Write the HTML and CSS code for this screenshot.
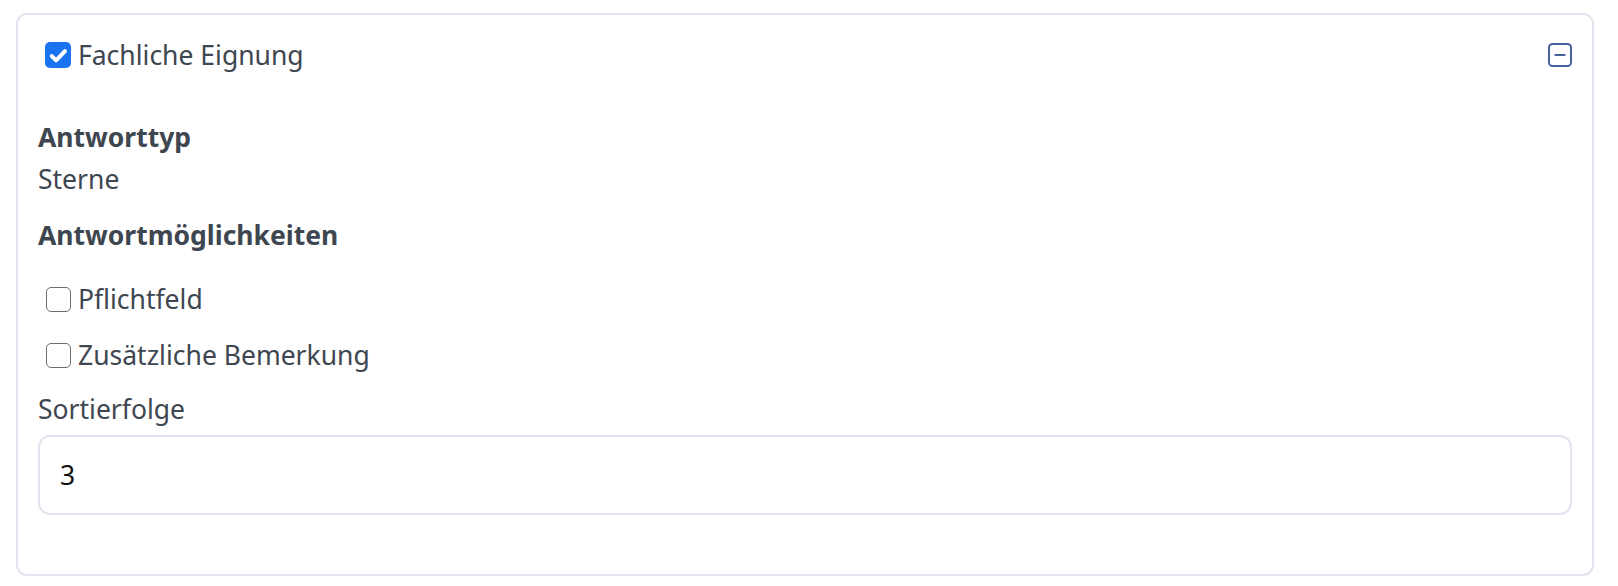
FILE: index.html
```html
<!DOCTYPE html>
<html lang="de">
<head>
    <meta charset="UTF-8">
    <meta name="viewport" content="width=device-width, initial-scale=1.0">
    <title>Fachliche Eignung</title>
    <link rel="stylesheet" href="styles.css">
</head>
<body>
    <div class="card">
        <div class="card-header">
            <label class="check">
                <input type="checkbox" class="box checked" checked>
                <span>Fachliche Eignung</span>
            </label>
            <button class="toggle" aria-label="Einklappen">
                <svg width="24" height="24" viewBox="0 0 24 24">
                    <rect x="1" y="1" width="22" height="22" rx="3.5" fill="none" stroke="#46639e" stroke-width="2"/>
                    <line x1="6.5" y1="12" x2="17.5" y2="12" stroke="#46639e" stroke-width="2"/>
                </svg>
            </button>
        </div>
        <div class="card-body">
            <div class="label-bold">Antworttyp</div>
            <div class="value">Sterne</div>
            <div class="label-bold options">Antwortmöglichkeiten</div>
            <label class="check row">
                <input type="checkbox" class="box">
                <span>Pflichtfeld</span>
            </label>
            <label class="check row">
                <input type="checkbox" class="box">
                <span>Zusätzliche Bemerkung</span>
            </label>
            <div class="field-label">Sortierfolge</div>
            <input type="text" class="field" value="3">
        </div>
    </div>
</body>
</html>
```

FILE: styles.css
```css
body {
    margin: 0;
    padding: 13px 24px 11px 16px;
    font-family: "Noto Sans", "Open Sans", sans-serif;
    font-size: 26.5px;
    color: #3e4650;
    background: #fff;
}
.card {
    border: 2px solid #e0e4ee;
    border-radius: 11px;
    height: 563px;
    box-sizing: border-box;
}
.card-header {
    display: flex;
    justify-content: space-between;
    align-items: center;
    padding: 25px 20px 0 27px;
    height: 30px;
}
.check {
    display: flex;
    align-items: center;
    gap: 7px;
    line-height: 30px;
}
.box {
    appearance: none;
    width: 25px;
    height: 25px;
    margin: 0;
    border: 1.6px solid #6c6f74;
    border-radius: 5px;
    background: #fff;
    box-sizing: border-box;
}
.box.checked {
    border: none;
    background: #1a73f0 url("data:image/svg+xml;utf8,<svg xmlns='http://www.w3.org/2000/svg' viewBox='0 0 24 24'><path d='M5.5 12.5l4.2 4.2 8.5-9' fill='none' stroke='white' stroke-width='3.8' stroke-linecap='round' stroke-linejoin='round'/></svg>") center / 25px no-repeat;
    width: 26px;
    height: 26px;
}
.toggle {
    border: none;
    background: none;
    padding: 0;
    display: flex;
}
.card-body {
    padding: 47px 20px 0 20px;
}
.label-bold {
    font-weight: 700;
    line-height: 40px;
}
.value {
    line-height: 40px;
    margin-top: 2px;
}
.options {
    margin-top: 16px;
}
.check.row {
    padding-left: 8px;
    margin-top: 24px;
    line-height: 40px;
}
.check.row + .check.row {
    margin-top: 16px;
}
.field-label {
    line-height: 40px;
    margin-top: 14px;
}
.field {
    display: block;
    width: 100%;
    height: 80px;
    margin-top: 6px;
    box-sizing: border-box;
    border: 2px solid #e0e4ee;
    border-radius: 12px;
    padding: 0 20px;
    font-family: "Noto Sans", sans-serif;
    font-size: 26.5px;
    color: #111;
}
```
